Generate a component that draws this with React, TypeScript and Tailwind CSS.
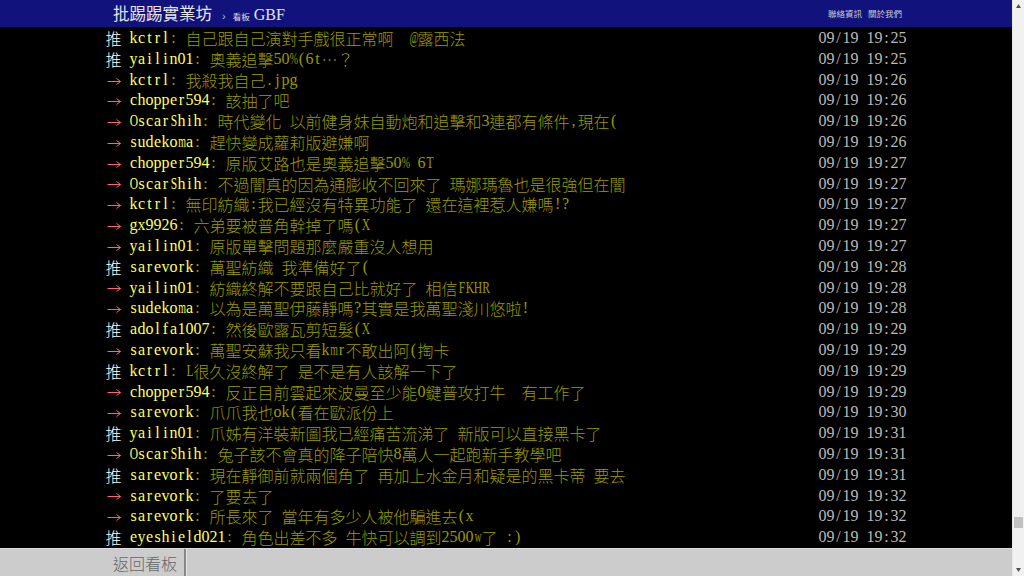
import React from "react";

type Row = { tag: "推" | "→"; user: string; text: string; time: string };

const rows: Row[] = [
  { tag: "推", user: "kctrl", text: "自己跟自己演對手戲很正常啊  @露西法", time: "09/19 19:25" },
  { tag: "推", user: "yailin01", text: "奧義追擊50%(6t…？", time: "09/19 19:25" },
  { tag: "→", user: "kctrl", text: "我殺我自己.jpg", time: "09/19 19:26" },
  { tag: "→", user: "chopper594", text: "該抽了吧", time: "09/19 19:26" },
  { tag: "→", user: "OscarShih", text: "時代變化 以前健身妹自動炮和追擊和3連都有條件,現在(", time: "09/19 19:26" },
  { tag: "→", user: "sudekoma", text: "趕快變成蘿莉版避嫌啊", time: "09/19 19:26" },
  { tag: "→", user: "chopper594", text: "原版艾路也是奧義追擊50% 6T", time: "09/19 19:27" },
  { tag: "→", user: "OscarShih", text: "不過闇真的因為通膨收不回來了 瑪娜瑪魯也是很強但在闇", time: "09/19 19:27" },
  { tag: "→", user: "kctrl", text: "無印紡織:我已經沒有特異功能了 還在這裡惹人嫌嗎!?", time: "09/19 19:27" },
  { tag: "→", user: "gx9926", text: "六弟要被普角幹掉了嗎(X", time: "09/19 19:27" },
  { tag: "→", user: "yailin01", text: "原版單擊問題那麼嚴重沒人想用", time: "09/19 19:27" },
  { tag: "推", user: "sarevork", text: "萬聖紡織 我準備好了(", time: "09/19 19:28" },
  { tag: "→", user: "yailin01", text: "紡織終解不要跟自己比就好了 相信FKHR", time: "09/19 19:28" },
  { tag: "→", user: "sudekoma", text: "以為是萬聖伊藤靜嗎?其實是我萬聖淺川悠啦!", time: "09/19 19:28" },
  { tag: "推", user: "adolfa1007", text: "然後歐露瓦剪短髮(X", time: "09/19 19:29" },
  { tag: "→", user: "sarevork", text: "萬聖安蘇我只看kmr不敢出阿(掏卡", time: "09/19 19:29" },
  { tag: "推", user: "kctrl", text: "L很久沒終解了 是不是有人該解一下了", time: "09/19 19:29" },
  { tag: "→", user: "chopper594", text: "反正目前雲起來波曼至少能0鍵普攻打牛  有工作了", time: "09/19 19:29" },
  { tag: "→", user: "sarevork", text: "爪爪我也ok(看在歐派份上", time: "09/19 19:30" },
  { tag: "推", user: "yailin01", text: "爪姊有洋裝新圖我已經痛苦流涕了 新版可以直接黑卡了", time: "09/19 19:31" },
  { tag: "→", user: "OscarShih", text: "兔子該不會真的降子陪快8萬人一起跑新手教學吧", time: "09/19 19:31" },
  { tag: "推", user: "sarevork", text: "現在靜御前就兩個角了 再加上水金月和疑是的黑卡蒂 要去", time: "09/19 19:31" },
  { tag: "→", user: "sarevork", text: "了要去了", time: "09/19 19:32" },
  { tag: "→", user: "sarevork", text: "所長來了 當年有多少人被他騙進去(x", time: "09/19 19:32" },
  { tag: "推", user: "eyeshield021", text: "角色出差不多 牛快可以調到2500w了 :)", time: "09/19 19:32" },
];

const WIDE = "mwMW%@";
const CAPS = "ABCDEFGHKLNOPQRSTUVXYZ&";

function Cell({ ch }: { ch: string }) {
  let cls = "inline-flex h-[20.8px] w-[8px] justify-center font-['Liberation_Serif',serif] leading-[20.8px]";
  if (WIDE.includes(ch))
    cls = "inline-flex h-[20.8px] w-[8px] justify-center scale-x-[0.62] font-['Liberation_Serif',serif] leading-[20.8px]";
  else if (CAPS.includes(ch))
    cls = "inline-flex h-[20.8px] w-[8px] justify-center scale-x-[0.72] font-['Liberation_Serif',serif] leading-[20.8px]";
  return <span className={cls}>{ch === " " ? "\u00a0" : ch}</span>;
}

function Seg({ s }: { s: string }) {
  const parts = s.split(/([\x00-\x7F]+)/).filter((p) => p.length > 0);
  return (
    <>
      {parts.map((p, i) =>
        /^[\x00-\x7F]+$/.test(p) ? (
          <React.Fragment key={i}>
            {Array.from(p).map((c, j) => (
              <Cell key={j} ch={c} />
            ))}
          </React.Fragment>
        ) : (
          <span
            key={i}
            className="inline-block h-[20.8px] font-['Noto_Sans_CJK_TC',sans-serif] font-light leading-[20.8px]"
          >
            {p}
          </span>
        )
      )}
    </>
  );
}

function Arrow() {
  return (
    <svg width="16" height="21" viewBox="0 0 16 21" className="block">
      <path d="M1.5 11.5 H14.5 M10.5 8.5 L14.5 11.5 L10.5 14.5" stroke="#ff6666" strokeWidth="1" fill="none" />
    </svg>
  );
}

export default function App() {
  return (
    <div className="flex h-[576px] w-[1024px] overflow-hidden bg-black">
      <div className="flex h-full flex-1 flex-col">
        <div className="h-[27px] shrink-0 bg-[#12127d]">
          <div className="mx-auto flex h-full w-[800px] items-center justify-between pl-[7px] pr-[4px]">
            <div className="flex items-baseline">
              <span className="font-['Noto_Sans_CJK_TC',sans-serif] text-[16.5px] leading-[27px] text-[#e6e6e6]">
                批踢踢實業坊
              </span>
              <span className="ml-[10px] font-['Liberation_Sans',sans-serif] text-[11px] text-[#bbbbbb]">›</span>
              <span className="ml-[7px] font-['Noto_Sans_CJK_TC',sans-serif] text-[8.5px] text-[#dddddd]">看板</span>
              <span className="ml-[4px] font-['Liberation_Serif',serif] text-[16px] text-[#e6e6e6]">GBF</span>
            </div>
            <div className="flex gap-[6px] font-['Noto_Sans_CJK_TC',sans-serif] text-[8.5px] text-[#cccccc]">
              <span>聯絡資訊</span>
              <span>關於我們</span>
            </div>
          </div>
        </div>
        <div className="flex-1 pt-[1px]">
          <div className="mx-auto w-[801px] text-[16px] leading-[20.8px] whitespace-pre">
            {rows.map((r, i) => (
              <div key={i} className="flex h-[20.8px] items-center">
                <span className="flex w-[24px] items-center">
                  {r.tag === "推" ? (
                    <span className="inline-block h-[20.8px] font-['Noto_Sans_CJK_TC',sans-serif] font-light leading-[20.8px] text-white">
                      推
                    </span>
                  ) : (
                    <Arrow />
                  )}
                </span>
                <span className="flex text-[#ffff66]">
                  <Seg s={r.user} />
                </span>
                <span className="flex text-[#999900]">
                  <Seg s={": " + r.text} />
                </span>
                <span className="ml-auto flex text-[#bbbbbb]">
                  <Seg s={r.time} />
                </span>
              </div>
            ))}
          </div>
        </div>
        <div className="h-[28px] shrink-0 border-t border-[#dddddd] bg-[#cccccc]">
          <div className="mx-auto flex h-full w-[800px]">
            <div className="flex items-center pl-[7px] pr-[7px] font-['Noto_Sans_CJK_TC',sans-serif] text-[16px] font-light text-[#666666]">
              返回看板
            </div>
            <div className="w-[2px] bg-[#888888]" />
            <div className="w-[1px] bg-[#e4e4e4]" />
          </div>
        </div>
      </div>
      <div className="flex h-full w-[12px] shrink-0 flex-col items-center border-l border-[#e8e8e8] bg-[#f1f1f1]">
        <div className="flex h-[12px] w-full items-center justify-center">
          <svg width="5" height="4" viewBox="0 0 5 4">
            <path d="M2.5 0 L5 4 L0 4 Z" fill="#505050" />
          </svg>
        </div>
        <div className="flex-1" />
        <div className="mb-[36px] h-[11px] w-[9px] bg-[#c1c1c1]" />
        <div className="flex h-[12px] w-full items-center justify-center">
          <svg width="5" height="4" viewBox="0 0 5 4">
            <path d="M0 0 L5 0 L2.5 4 Z" fill="#505050" />
          </svg>
        </div>
      </div>
    </div>
  );
}
